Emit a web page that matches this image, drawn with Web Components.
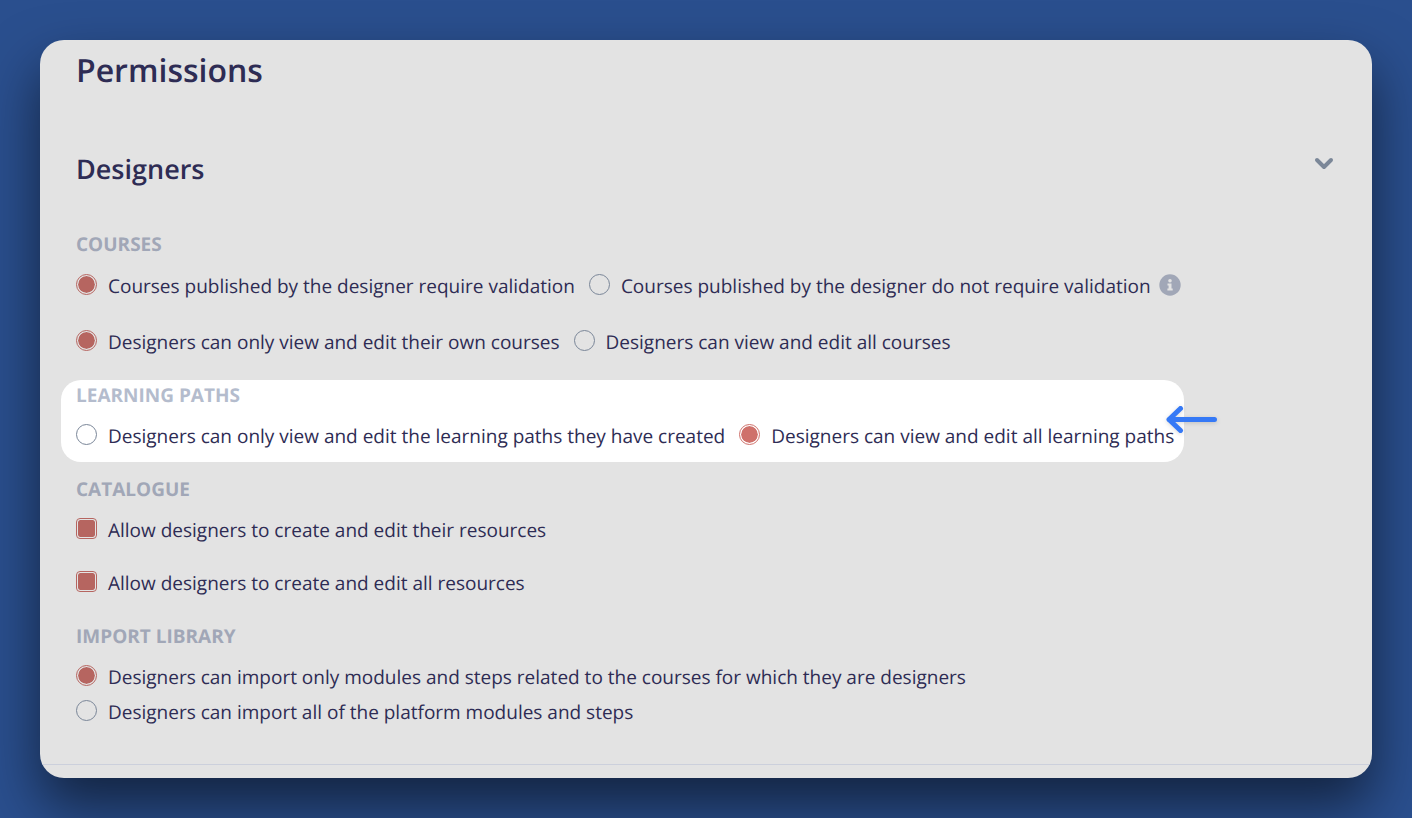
<!DOCTYPE html>
<html lang="en">
<head>
<meta charset="utf-8">
<meta name="viewport" content="width=device-width, initial-scale=1">
<title>Permissions</title>
<style>
  html { background: #2a4f8e; }
  body {
    margin: 0; padding: 40px; min-height: 100vh; box-sizing: border-box; display: flex; overflow-x: hidden;
    font-family: "Open Sans", "Noto Sans", sans-serif; font-size: 19px; line-height: 26px; color: #2e2c54;
    text-rendering: geometricPrecision;
    --surface: #e3e3e3; --accent: #b66560; --muted: #a1a7b7; --outline: #7a8698;
  }
</style>
</head>
<body>
<perm-panel>
  <span slot="title">Permissions</span>
  <span slot="subtitle">Designers</span>
  <perm-section label="Courses" roomy>
    <perm-row>
      <perm-option checked>Courses published by the designer require validation</perm-option>
      <perm-option>Courses published by the designer do not require validation</perm-option>
      <info-tip></info-tip>
    </perm-row>
    <perm-row>
      <perm-option checked>Designers can only view and edit their own courses</perm-option>
      <perm-option>Designers can view and edit all courses</perm-option>
    </perm-row>
  </perm-section>
  <perm-section label="Learning paths" highlight>
    <perm-row>
      <perm-option>Designers can only view and edit the learning paths they have created</perm-option>
      <perm-option checked>Designers can view and edit all learning paths</perm-option>
    </perm-row>
  </perm-section>
  <perm-section label="Catalogue">
    <perm-row><perm-option type="checkbox" checked>Allow designers to create and edit their resources</perm-option></perm-row>
    <perm-row><perm-option type="checkbox" checked>Allow designers to create and edit all resources</perm-option></perm-row>
  </perm-section>
  <perm-section label="Import library">
    <perm-row stacked>
      <perm-option checked>Designers can import only modules and steps related to the courses for which they are designers</perm-option>
      <perm-option>Designers can import all of the platform modules and steps</perm-option>
    </perm-row>
  </perm-section>
</perm-panel>
<script>
const define = (name, html, init) => customElements.define(name, class extends HTMLElement {
  constructor() {
    super();
    this.attachShadow({ mode: "open" }).innerHTML = html;
    if (init) init(this, this.shadowRoot);
  }
});

define("perm-option", `<style>
  :host { display: block; }
  label { display: flex; gap: 11px; cursor: pointer; }
  input {
    appearance: none; flex: none; box-sizing: border-box; width: 21px; height: 21px; margin: 1px 0 0;
    border: 1px solid var(--outline); border-radius: 50%;
  }
  input[type=checkbox] { border-radius: 4px; }
  input:checked { border-color: var(--accent); background: var(--accent) content-box; padding: 1px; }
  input:checked { box-shadow: inset 0 0 0 1px var(--surface); }
</style><label><input type="radio"><span><slot></slot></span></label>`, (host, root) => {
  const input = root.querySelector("input");
  input.type = host.getAttribute("type") || "radio";
  input.checked = host.hasAttribute("checked");
  input.addEventListener("change", () => host.dispatchEvent(new CustomEvent("pick", { bubbles: true })));
});

define("perm-row", `<style>
  :host { display: flex; flex-wrap: wrap; column-gap: 14px; row-gap: 9px; }
  :host([stacked]) { flex-direction: column; }
  ::slotted(info-tip) { margin-left: -6px; }
</style><slot></slot>`, host => {
  host.addEventListener("pick", event => {
    if (event.target.getAttribute("type") === "checkbox") return;
    for (const option of host.querySelectorAll("perm-option")) {
      if (option !== event.target) option.shadowRoot.querySelector("input").checked = false;
    }
  });
});

define("info-tip", `<style>
  :host { display: block; }
  button { display: block; width: 22px; height: 22px; margin: 1px 0 0; padding: 0; border: 0; background: none; }
  svg { display: block; }
</style><button type="button" aria-label="More information"><svg width="22" height="22" viewBox="0 0 22 22" aria-hidden="true">
  <circle cx="11" cy="11" r="10.7" fill="var(--muted)"/>
  <circle cx="11" cy="6.7" r="1.8" fill="var(--surface)"/>
  <path d="M8.5 9.5h4v5h1.2v2H8.4v-2h1.2v-3H8.5z" fill="var(--surface)"/>
</svg></button>`);

define("perm-section", `<style>
  :host { display: block; }
  section { display: grid; row-gap: 15px; }
  h3 { margin: 0; font-size: 19px; font-weight: 700; color: var(--muted); text-transform: uppercase; }
  .rows { display: grid; row-gap: 27px; }
  :host([roomy]) section { row-gap: 16px; }
  :host([roomy]) .rows { row-gap: 30px; }
  svg { display: none; }
  :host([highlight]) {
    --surface: #fff; --accent: #cf716b; --muted: #b4bccd;
    position: relative; width: fit-content; margin: -2px -15px -13px; padding: 2px 10px 13px 15px;
    background: #fff; border-radius: 20px;
  }
  :host([highlight]) svg {
    display: block; position: absolute; right: -36px; top: 22px; overflow: visible;
    filter: drop-shadow(0 1px 2px rgba(0, 0, 0, .15));
  }
</style><section><h3></h3><div class="rows"><slot></slot></div></section>
<svg width="56" height="36" viewBox="0 0 56 36" fill="none" stroke="#3579f6" stroke-width="5" stroke-linecap="round" stroke-linejoin="round" aria-hidden="true"><path d="M50.500 17.500H5M16.500 6.500l-11.500 11 11.500 11"/></svg>`, (host, root) => {
  root.querySelector("h3").textContent = host.getAttribute("label");
});

define("perm-panel", `<style>
  :host {
    display: block; flex: 1; box-sizing: border-box; min-width: 0; padding: 9px 0 13px; overflow: hidden;
    background: var(--surface); border-radius: 24px; box-shadow: 0 28px 56px rgba(0, 0, 0, .55);
  }
  header, .bar, .sections { margin: 0 36px; }
  h1 { margin: 0; font-size: 32px; line-height: 44px; font-weight: 600; }
  .bar { display: flex; justify-content: space-between; align-items: flex-start; margin-top: 57px; }
  h2 { margin: 0; font-size: 27px; line-height: 38px; font-weight: 600; }
  button { display: block; width: 24px; height: 26px; padding: 0; border: 0; background: none; color: #7b8798; }
  svg { display: block; }
  .sections { display: grid; row-gap: 27px; margin-top: 43px; padding-bottom: 39px; }
  hr { margin: 0; border: 0; border-top: 1px solid #ccd0dc; }
</style>
<header><h1><slot name="title"></slot></h1></header>
<div class="bar"><h2><slot name="subtitle"></slot></h2>
  <button type="button" aria-label="Toggle section" aria-expanded="true"><svg width="24" height="26" viewBox="0 0 24 26" fill="none" stroke="currentColor" stroke-width="4" stroke-linecap="round" stroke-linejoin="round"><path d="M5 10l7 7 7-7"/></svg></button>
</div>
<div class="sections"><slot></slot></div><hr>`);
</script>
</body>
</html>
